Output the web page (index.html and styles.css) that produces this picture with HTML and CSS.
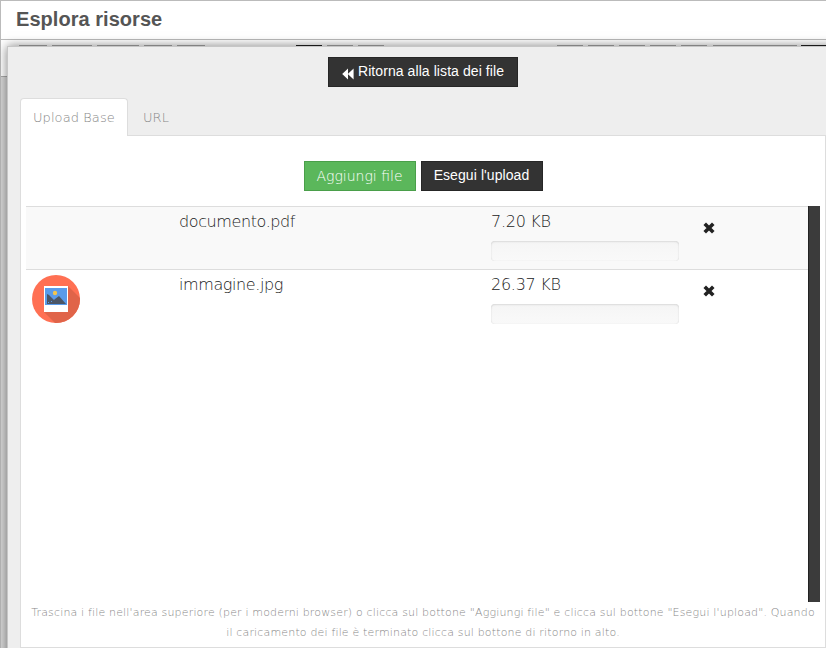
FILE: index.html
```
<!DOCTYPE html>
<html lang="it">
<head>
<meta charset="utf-8">
<title>Esplora risorse</title>
<link rel="stylesheet" href="styles.css">
</head>
<body>
<div class="window">
  <header class="titlebar">Esplora risorse</header>
  <div class="toolbar">
    <i class="tool w28"></i><i class="tool w40"></i><i class="tool w42"></i><i class="tool w28"></i><i class="tool w28"></i>
    <i class="tool w26 dark second"></i><i class="tool w26"></i><i class="tool w26"></i>
    <i class="tool w26 third"></i><i class="tool w26"></i><i class="tool w26"></i><i class="tool w26"></i><i class="tool w26"></i><i class="tool w84"></i><i class="tool w26 dark last"></i>
  </div>
  <div class="backdrop"></div>
</div>
<main class="uploader">
  <div class="top">
    <button class="btn back"><svg width="12" height="12" viewBox="0 0 12 12"><path d="M6 .4v11.2L.2 6zM11.6.4v11.2L5.8 6z" fill="#fff"/></svg><span>Ritorna alla lista dei file</span></button>
  </div>
  <nav class="tabs"><a class="tab active">Upload Base</a><a class="tab">URL</a></nav>
  <section class="panel">
    <div class="actions"><button class="btn add">Aggiungi file</button><button class="btn">Esegui l'upload</button></div>
    <div class="list">
      <div class="rows">
        <div class="row odd">
          <div class="thumb"></div>
          <div class="name">documento.pdf</div>
          <div class="size"><span>7.20 KB</span><div class="progress"></div></div>
          <svg class="remove" width="12" height="12" viewBox="0 0 12 12"><path d="M3 3l6 6M9 3L3 9" stroke="#222" stroke-width="3.6" stroke-linecap="square"/></svg>
        </div>
        <div class="row">
          <div class="thumb">
            <svg width="48" height="48" viewBox="0 0 48 48"><defs><clipPath id="disc"><circle cx="24" cy="24" r="24"/></clipPath></defs><g clip-path="url(#disc)"><path fill="#ff7053" d="M0 0h48v48H0z"/><path fill="#e06449" d="M36 11l14 14v25H25L12 37z"/></g><path fill="#fff" d="M12 11h24v26H12z"/><path fill="#5a9bea" d="M13 13h22v17H13z"/><circle cx="23" cy="18" r="2.2" fill="#f3c54d"/><path fill="#4b5666" d="M15 29V19l2 1 5 5 1-1 4-3 7 8z"/><path fill="#5a9bea" d="M16 27h1v1h-1zM19 26h1v1h-1z"/></svg>
          </div>
          <div class="name">immagine.jpg</div>
          <div class="size"><span>26.37 KB</span><div class="progress"></div></div>
          <svg class="remove" width="12" height="12" viewBox="0 0 12 12"><path d="M3 3l6 6M9 3L3 9" stroke="#222" stroke-width="3.6" stroke-linecap="square"/></svg>
        </div>
      </div>
      <div class="scroll"></div>
    </div>
    <p class="help">Trascina i file nell'area superiore (per i moderni browser) o clicca sul bottone "Aggiungi file" e clicca sul bottone "Esegui l'upload". Quando<br>il caricamento dei file è terminato clicca sul bottone di ritorno in alto.</p>
  </section>
</main>
</body>
</html>
```
FILE: styles.css
```
* { box-sizing: border-box; }
body { margin: 0; width: 826px; height: 648px; overflow: hidden; position: relative; background: #fff; font-family: "DejaVu Sans", sans-serif; }
.window { height: 648px; border-left: 1px solid #bbb; display: flex; flex-direction: column; }
.titlebar { height: 40px; border-top: 1px solid #bbb; border-bottom: 1px solid #bbb; padding-left: 15px; font: bold 20px/36px "Liberation Sans", sans-serif; color: #555; letter-spacing: .04px; }
.toolbar { height: 37px; padding: 5px 0 0 18px; display: flex; gap: 5px; overflow: hidden; background: #fff; border-bottom: 1px solid #aaa; }
.tool { flex: none; height: 26px; border-top: 1px solid #aaa; }
.tool.dark { border-color: #222; }
.w26 { width: 26px; } .w28 { width: 28px; } .w40 { width: 40px; } .w42 { width: 42px; } .w84 { width: 84px; margin-left: 1px; }
.second { margin-left: 86px; } .third { margin-left: 168px; } .last { margin-left: -1px; }
.backdrop { flex: 1; background: #d8d8d8; }
.uploader { position: absolute; left: 7px; top: 46px; width: 830px; height: 620px; border: 1px solid #c6c6c6; background: #eee; box-shadow: 0 0 10px rgba(0,0,0,.5); padding: 0 0 0 12px; }
.top { width: 806px; height: 51px; padding-top: 10px; text-align: center; }
.btn { height: 30px; padding: 0 0 2px; border: 1px solid #262626; background: #333; color: #fff; font: 14px/24px "Liberation Sans", sans-serif; letter-spacing: .08px; display: inline-block; width: 122px; }
.back { width: 190px; display: flex; align-items: center; justify-content: center; gap: 4px; margin: 0 auto; }
.back svg { margin-top: 5px; }
.tabs { display: flex; height: 37px; width: 806px; }
.tab { height: 38px; padding: 0 12px; font-size: 13px; line-height: 40px; color: #888; font-weight: 200; letter-spacing: .08px; margin-left: 2px; }
.tab.active { width: 108px; line-height: 38px; white-space: nowrap; margin: 0 1px 0 0; border: 1px solid #ddd; border-bottom: 0; border-radius: 4px 4px 0 0; background: #fff; position: relative; z-index: 1; }
.panel { width: 806px; height: 513px; border: 1px solid #ddd; background: #fff; padding: 25px 5px 0; }
.actions { display: flex; justify-content: center; gap: 5px; height: 45px; }
.btn.add { width: 112px; background: #5bb75b; border-color: #4a9f4a; color: #fff; font: 200 14px/28px "DejaVu Sans", sans-serif; letter-spacing: 0; padding: 0; }
.list { display: flex; height: 396px; }
.rows { width: 782px; }
.row { height: 63px; display: grid; grid-template-columns: 153px 312px 212px 1fr; padding-top: 5px; }
.row.odd { height: 64px; border-top: 1px solid #ddd; border-bottom: 1px solid #ddd; background: #f9f9f9; }
.thumb { padding-left: 6px; }
.thumb svg { display: block; }
.name, .size { font-size: 16px; line-height: 20px; font-weight: 200; color: #222; letter-spacing: -.4px; }
.size { letter-spacing: -.27px; }
.size span { display: block; height: 29px; }
.progress { width: 188px; height: 20px; border-radius: 4px; background: linear-gradient(#f5f5f5, #f9f9f9); box-shadow: inset 0 1px 2px rgba(0,0,0,.1), inset 0 0 1px rgba(0,0,0,.15); }
.remove { margin: 10px 0 0; }
.scroll { width: 12px; background: #3b3b3b; border-left: 1px solid #222; }
.help { margin: 1px -3px 0; font-size: 11px; line-height: 20px; text-align: center; color: #888; font-weight: 200; letter-spacing: .165px; white-space: nowrap; }
```
